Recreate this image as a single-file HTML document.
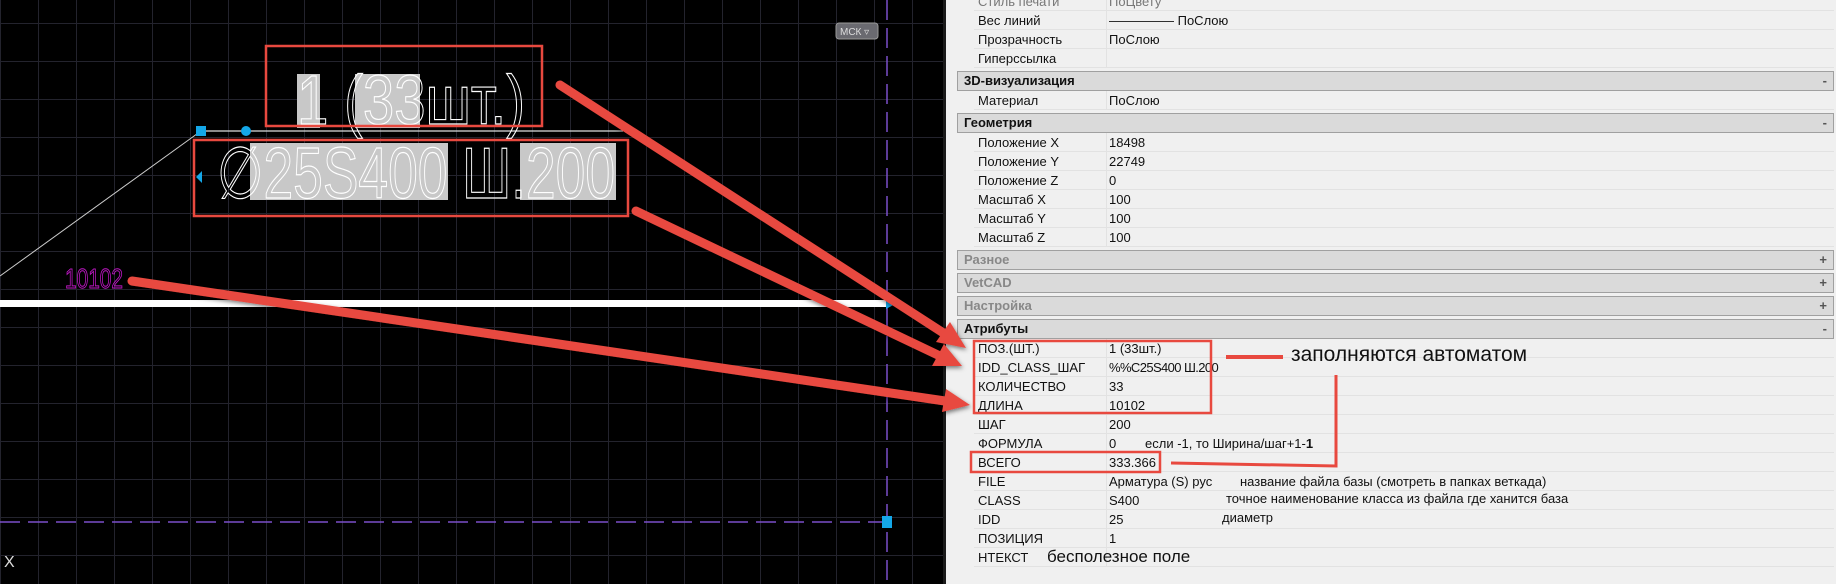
<!DOCTYPE html>
<html><head><meta charset="utf-8"><style>
*{margin:0;padding:0;box-sizing:border-box}
body{width:1836px;height:584px;overflow:hidden;background:#000;position:relative;font-family:"Liberation Sans","DejaVu Sans",sans-serif}
#cad{position:absolute;left:0;top:0;width:943px;height:584px;background-color:#000;
background-image:linear-gradient(#23232d 1px,transparent 1px),linear-gradient(90deg,#23232d 1px,transparent 1px);
background-size:38px 38px;background-position:0 23px}
#panel{position:absolute;left:943px;top:0;width:893px;height:584px;background:#f0f0f0;border-left:3px solid #1a1a1a;font-size:13px;color:#111}
.row{position:absolute;left:28px;right:2px;height:19px;border-bottom:1px solid #e2e2e2;background:#f0f0f0}
.row .n{position:absolute;left:4px;top:2px}
.row .v{position:absolute;left:135px;top:2px;white-space:nowrap}
.row .d{position:absolute;left:132px;top:0;bottom:0;width:1px;background:#e2e2e2}
.hd{position:absolute;left:11px;right:2px;height:20px;background:#dadada;border:1px solid #a0a0a0;font-weight:bold;padding:1px 6px}
.hd.g{color:#888}
.hd span{position:absolute;right:6px;top:1px;font-weight:bold;color:#555}
.note{position:absolute;white-space:nowrap;font-size:13px;color:#111}
</style></head><body>
<div id="cad"></div>
<svg style="position:absolute;left:0;top:0" width="943" height="584">
 <line x1="887" y1="0" x2="887" y2="584" stroke="#7a4fc9" stroke-width="1.5" stroke-dasharray="20,8"/>
 <line x1="0" y1="522" x2="887" y2="522" stroke="#7a4fc9" stroke-width="1.5" stroke-dasharray="20,8"/>
 <rect x="882" y="516" width="10" height="12" fill="#14a7e8"/>
 <rect x="0" y="300" width="887" height="7" fill="#fff"/>
 <polygon points="886,298 896,303.5 886,309" fill="#14a7e8"/>
 <rect x="836" y="23" width="42" height="16" rx="3" fill="#6a6a70" stroke="#999"/>
 <text x="840" y="35" font-size="10" fill="#ddd" font-family="Liberation Sans,sans-serif">МСК ▿</text>
 <line x1="201" y1="131" x2="623" y2="131" stroke="#ddd" stroke-width="1.2"/>
 <line x1="201" y1="131" x2="0" y2="276" stroke="#ccc" stroke-width="1"/>
 <rect x="196" y="126" width="10" height="10" fill="#14a7e8"/>
 <circle cx="246" cy="131" r="5" fill="#14a7e8"/>
 <polygon points="196,177 202,171 202,183" fill="#14a7e8"/>
 <rect x="297" y="74" width="23" height="54" fill="#c8c8c8"/>
 <rect x="355" y="74" width="65" height="54" fill="#c8c8c8"/>
 <text x="297" y="124" font-size="70" fill="none" stroke="#fff" stroke-width="1.2" font-family="Liberation Sans,sans-serif" textLength="228" lengthAdjust="spacingAndGlyphs">1 (33шт.)</text>
 <rect x="250" y="143" width="198" height="57" fill="#c8c8c8"/>
 <rect x="520" y="143" width="96" height="57" fill="#c8c8c8"/>
 <text x="217" y="198" font-size="72" fill="none" stroke="#fff" stroke-width="1.2" font-family="Liberation Sans,sans-serif" textLength="398" lengthAdjust="spacingAndGlyphs">∅25S400 Ш.200</text>
 <rect x="266" y="46" width="276" height="80" fill="none" stroke="#e8493f" stroke-width="2.5"/>
 <rect x="194" y="140" width="434" height="76" fill="none" stroke="#e8493f" stroke-width="2.5"/>
 <text x="65" y="288" font-size="28" fill="none" stroke="#c218c8" stroke-width="1" font-family="Liberation Sans,sans-serif" textLength="58" lengthAdjust="spacingAndGlyphs">10102</text>
 <text x="4" y="567" font-size="16" fill="#ddd" font-family="Liberation Sans,sans-serif">X</text>
</svg>
<div id="panel">
 <div class="row" style="top:-8px;color:#777"><span class="n">Стиль печати</span><span class="d"></span><span class="v">ПоЦвету</span></div>
 <div class="row" style="top:11px"><span class="n">Вес линий</span><span class="d"></span><span class="v">————— ПоСлою</span></div>
 <div class="row" style="top:30px"><span class="n">Прозрачность</span><span class="d"></span><span class="v">ПоСлою</span></div>
 <div class="row" style="top:49px"><span class="n">Гиперссылка</span><span class="d"></span><span class="v"></span></div>
 <div class="hd" style="top:71px">3D-визуализация<span>-</span></div>
 <div class="row" style="top:91px"><span class="n">Материал</span><span class="d"></span><span class="v">ПоСлою</span></div>
 <div class="hd" style="top:113px">Геометрия<span>-</span></div>
 <div class="row" style="top:133px"><span class="n">Положение X</span><span class="d"></span><span class="v">18498</span></div>
 <div class="row" style="top:152px"><span class="n">Положение Y</span><span class="d"></span><span class="v">22749</span></div>
 <div class="row" style="top:171px"><span class="n">Положение Z</span><span class="d"></span><span class="v">0</span></div>
 <div class="row" style="top:190px"><span class="n">Масштаб X</span><span class="d"></span><span class="v">100</span></div>
 <div class="row" style="top:209px"><span class="n">Масштаб Y</span><span class="d"></span><span class="v">100</span></div>
 <div class="row" style="top:228px"><span class="n">Масштаб Z</span><span class="d"></span><span class="v">100</span></div>
 <div class="hd g" style="top:250px">Разное<span>+</span></div>
 <div class="hd g" style="top:273px">VetCAD<span>+</span></div>
 <div class="hd g" style="top:296px">Настройка<span>+</span></div>
 <div class="hd" style="top:319px">Атрибуты<span>-</span></div>
 <div class="row" style="top:339px"><span class="n">ПОЗ.(ШТ.)</span><span class="d"></span><span class="v">1 (33шт.)</span></div>
 <div class="row" style="top:358px"><span class="n">IDD_CLASS_ШАГ</span><span class="d"></span><span class="v" style="letter-spacing:-0.6px">%%C25S400 Ш.200</span></div>
 <div class="row" style="top:377px"><span class="n">КОЛИЧЕСТВО</span><span class="d"></span><span class="v">33</span></div>
 <div class="row" style="top:396px"><span class="n">ДЛИНА</span><span class="d"></span><span class="v">10102</span></div>
 <div class="row" style="top:415px"><span class="n">ШАГ</span><span class="d"></span><span class="v">200</span></div>
 <div class="row" style="top:434px"><span class="n">ФОРМУЛА</span><span class="d"></span><span class="v">0</span></div>
 <div class="row" style="top:453px"><span class="n">ВСЕГО</span><span class="d"></span><span class="v">333.366</span></div>
 <div class="row" style="top:472px"><span class="n">FILE</span><span class="d"></span><span class="v">Арматура (S) рус</span></div>
 <div class="row" style="top:491px"><span class="n">CLASS</span><span class="d"></span><span class="v">S400</span></div>
 <div class="row" style="top:510px"><span class="n">IDD</span><span class="d"></span><span class="v">25</span></div>
 <div class="row" style="top:529px"><span class="n">ПОЗИЦИЯ</span><span class="d"></span><span class="v">1</span></div>
 <div class="row" style="top:548px"><span class="n">НТЕКСТ</span><span class="d"></span></div>
 <div class="note" style="left:199px;top:436px">если -1, то Ширина/шаг+1-<b>1</b></div>
 <div class="note" style="left:294px;top:474px">название файла базы (смотреть в папках веткада)</div>
 <div class="note" style="left:280px;top:491px">точное наименование класса из файла где ханится база</div>
 <div class="note" style="left:276px;top:510px">диаметр</div>
 <div class="note" style="left:101px;top:547px;font-size:17px">бесполезное поле</div>
 <div class="note" style="left:345px;top:343px;font-size:21px">заполняются автоматом</div>
</div>
<svg style="position:absolute;left:0;top:0" width="1836" height="584">
 <defs><filter id="sh"><feDropShadow dx="1" dy="2" stdDeviation="2" flood-opacity="0.5"/></filter></defs>
 <g stroke="#e8493f" stroke-linecap="round" fill="#e8493f" filter="url(#sh)">
  <line x1="560" y1="85" x2="945" y2="334" stroke-width="9"/>
  <polygon points="966,348 936,342 950,322" stroke="none"/>
  <line x1="636" y1="211" x2="940" y2="356" stroke-width="9"/>
  <polygon points="962,366 932,366 944,344" stroke="none"/>
  <line x1="132" y1="281" x2="945" y2="401" stroke-width="9"/>
  <polygon points="970,405 942,412 946,389" stroke="none"/>
 </g>
 <g fill="none" stroke="#e8493f" stroke-width="2.5">
  <rect x="974" y="341" width="237" height="72"/>
  <rect x="971" y="452" width="189" height="20"/>
 </g>
 <polyline points="1171,463 1336,466 1336,375" fill="none" stroke="#e8493f" stroke-width="3"/>
 <line x1="1226" y1="357" x2="1283" y2="357" stroke="#e8493f" stroke-width="4"/>
</svg>
</body></html>
